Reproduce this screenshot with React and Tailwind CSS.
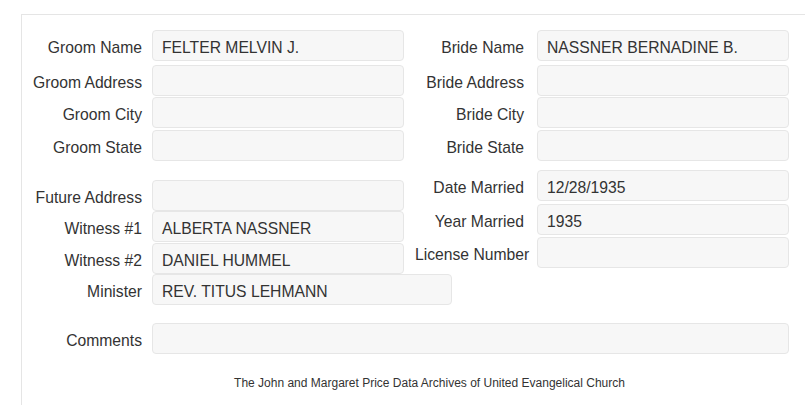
import React from "react";

function Box({ value, width = "w-[252px]" }) {
  return (
    <div className={`${width} shrink-0 h-[31px] flex items-center pt-[4px] pl-[9px] rounded-[4px] border border-[#e6e6e6] bg-[#f7f7f7] text-[#333] whitespace-nowrap overflow-hidden`}>
      {value}
    </div>
  );
}

function LeftField({ label, value, width }) {
  return (
    <div className="flex items-center">
      <div className="w-[130px] shrink-0 pr-[10px] pt-[4px] text-right text-[#333] whitespace-nowrap">{label}</div>
      <Box value={value} width={width} />
    </div>
  );
}

function RightField({ label, value }) {
  return (
    <div className="flex items-center">
      <div className="w-[109px] shrink-0 pt-[4px] text-right text-[#333] whitespace-nowrap">{label}</div>
      <div className="ml-[13px]">
        <Box value={value} />
      </div>
    </div>
  );
}

function TopRow({ left, right, className }) {
  return (
    <div className={`flex ${className}`}>
      <div className="w-[382px]">
        <LeftField label={left[0]} value={left[1]} />
      </div>
      <div className="ml-[11px]">
        <RightField label={right[0]} value={right[1]} />
      </div>
    </div>
  );
}

export default function App() {
  return (
    <div className="w-[805px] h-[405px] overflow-hidden bg-white font-['Liberation_Sans',Arial,sans-serif] text-[15.7px]">
      <div className="ml-[21px] mt-[14px] w-[816px] h-[391px] border-t border-l border-[#e5e5e5] pt-[15px]">
        <TopRow left={["Groom Name", "FELTER MELVIN J."]} right={["Bride Name", "NASSNER BERNADINE B."]} />
        <TopRow className="mt-[4px]" left={["Groom Address", ""]} right={["Bride Address", ""]} />
        <TopRow className="mt-[1px]" left={["Groom City", ""]} right={["Bride City", ""]} />
        <TopRow className="mt-[2px]" left={["Groom State", ""]} right={["Bride State", ""]} />

        <div className="flex items-start">
          <div className="w-[382px] shrink-0 pt-[19px]">
            <LeftField label="Future Address" value="" />
            <LeftField label="Witness #1" value="ALBERTA NASSNER" />
            <div className="mt-[1px]">
              <LeftField label="Witness #2" value="DANIEL HUMMEL" />
            </div>
            <LeftField label="Minister" value="REV. TITUS LEHMANN" width="w-[300px]" />
          </div>
          <div className="ml-[11px] pt-[9px]">
            <RightField label="Date Married" value="12/28/1935" />
            <div className="mt-[3px]">
              <RightField label="Year Married" value="1935" />
            </div>
            <div className="mt-[2px]">
              <RightField label="License Number" value="" />
            </div>
          </div>
        </div>

        <div className="mt-[18px]">
          <LeftField label="Comments" value="" width="w-[637px]" />
        </div>

        <div className="mt-[22px] text-center text-[12px] leading-[14px] text-[#333]">
          The John and Margaret Price Data Archives of United Evangelical Church
        </div>
      </div>
    </div>
  );
}
